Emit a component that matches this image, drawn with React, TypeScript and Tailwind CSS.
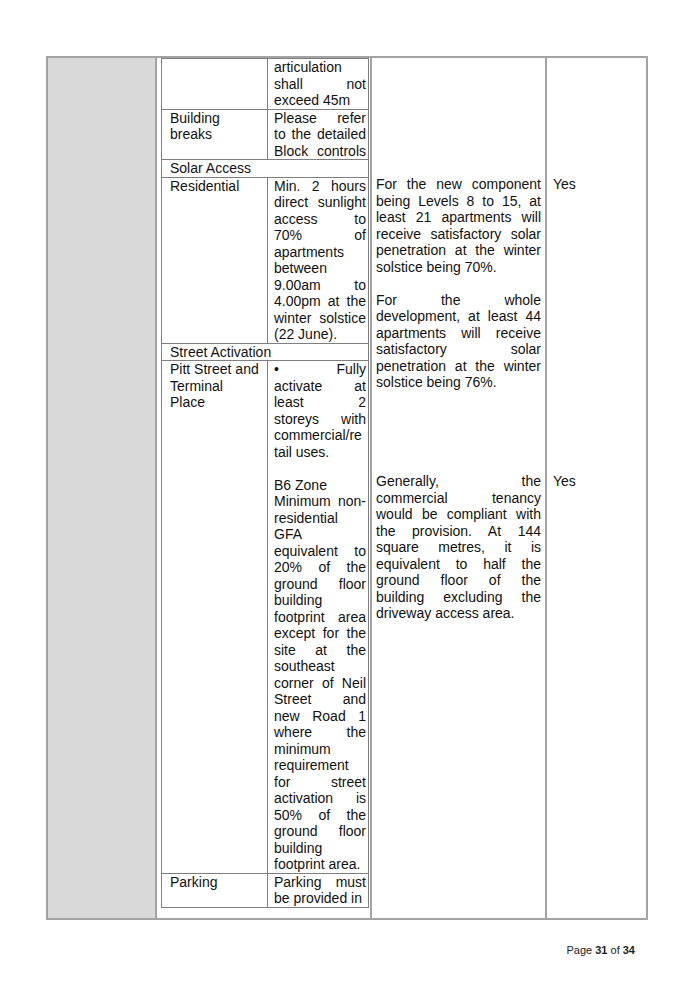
type Line = string | { t: string; left?: boolean };

// lines are justified unless marked left (last line of a paragraph)
function Lines({ lines }: { lines: Line[] }) {
  return (
    <>
      {lines.map((l, i) => {
        const t = typeof l === "string" ? l : l.t;
        const left = typeof l === "string" ? false : l.left;
        return (
          <div key={i} className={left ? "text-left" : "text-justify [text-align-last:justify]"}>
            {t === "" ? "\u00a0" : t}
          </div>
        );
      })}
    </>
  );
}

const L = (t: string) => ({ t, left: true });

function Row({ label, children, last }: { label: Line[]; children: React.ReactNode; last?: boolean }) {
  return (
    <div className={`flex ${last ? "" : "border-b"} border-[#7f7f7f]`}>
      <div className="w-[106px] shrink-0 border-r border-[#7f7f7f] pl-[8px] pr-[4px]">
        <Lines lines={label} />
      </div>
      <div className="flex-1 pl-[6px] pr-[2px]">{children}</div>
    </div>
  );
}

function SpanRow({ text }: { text: string }) {
  return <div className="border-b border-[#7f7f7f] pl-[8px]">{text}</div>;
}

export default function App() {
  return (
    <div className="w-[694px] h-[989px] bg-white text-[#111] font-['Liberation_Sans',Arial,sans-serif] text-[14px] leading-[16.5px] overflow-hidden">
      <div className="ml-[46px] mt-[56px] w-[602px] flex border-2 border-[#a3a3a3]">
        <div className="w-[109px] shrink-0 bg-[#d9d9d9] border-r-2 border-[#a3a3a3]" />

        <div className="w-[215px] shrink-0 border-r-2 border-[#a3a3a3] pl-[4px] pb-[10px]">
          <div className="w-[208px] border-x border-t border-b border-[#7f7f7f]">
            <Row label={[""]}>
              <Lines lines={[L("articulation"), "shall not", L("exceed 45m")]} />
            </Row>
            <Row label={[L("Building"), L("breaks")]}>
              <Lines lines={["Please refer", "to the detailed", "Block controls"]} />
            </Row>
            <SpanRow text="Solar Access" />
            <Row label={[L("Residential")]}>
              <Lines
                lines={[
                  "Min. 2 hours",
                  "direct sunlight",
                  "access to",
                  "70% of",
                  "apartments",
                  "between",
                  "9.00am to",
                  "4.00pm at the",
                  "winter solstice",
                  L("(22 June)."),
                ]}
              />
            </Row>
            <SpanRow text="Street Activation" />
            <Row label={[L("Pitt Street and"), L("Terminal"), L("Place")]}>
              <Lines
                lines={[
                  "\u2022 Fully",
                  "activate at",
                  "least 2",
                  "storeys with",
                  "commercial/re",
                  L("tail uses."),
                  "",
                  L("B6 Zone"),
                  "Minimum non-",
                  "residential",
                  "GFA",
                  "equivalent to",
                  "20% of the",
                  "ground floor",
                  "building",
                  "footprint area",
                  "except for the",
                  "site at the",
                  "southeast",
                  "corner of Neil",
                  "Street and",
                  "new Road 1",
                  "where the",
                  "minimum",
                  "requirement",
                  "for street",
                  "activation is",
                  "50% of the",
                  "ground floor",
                  "building",
                  L("footprint area."),
                ]}
              />
            </Row>
            <Row label={[L("Parking")]} last>
              <Lines lines={["Parking must", L("be provided in")]} />
            </Row>
          </div>
        </div>

        <div className="w-[175px] shrink-0 border-r-2 border-[#a3a3a3] pl-[4px] pr-[4px] pt-[118px]">
          <Lines
            lines={[
              "For the new component",
              "being Levels 8 to 15, at",
              "least 21 apartments will",
              "receive satisfactory solar",
              "penetration at the winter",
              L("solstice being 70%."),
              "",
              "For the whole",
              "development, at least 44",
              "apartments will receive",
              "satisfactory solar",
              "penetration at the winter",
              L("solstice being 76%."),
              "",
              "",
              "",
              "",
              "",
              "Generally, the",
              "commercial tenancy",
              "would be compliant with",
              "the provision. At 144",
              "square metres, it is",
              "equivalent to half the",
              "ground floor of the",
              "building excluding the",
              L("driveway access area."),
            ]}
          />
        </div>

        <div className="flex-1 pl-[6px] pt-[118px]">
          <div>Yes</div>
          <div className="mt-[280.5px]">Yes</div>
        </div>
      </div>

      <div className="ml-[46px] w-[602px] mt-[24px] pr-[13px] text-right text-[11px] leading-[13px] text-[#222]">
        Page <span className="font-bold">31</span> of <span className="font-bold">34</span>
      </div>
    </div>
  );
}
